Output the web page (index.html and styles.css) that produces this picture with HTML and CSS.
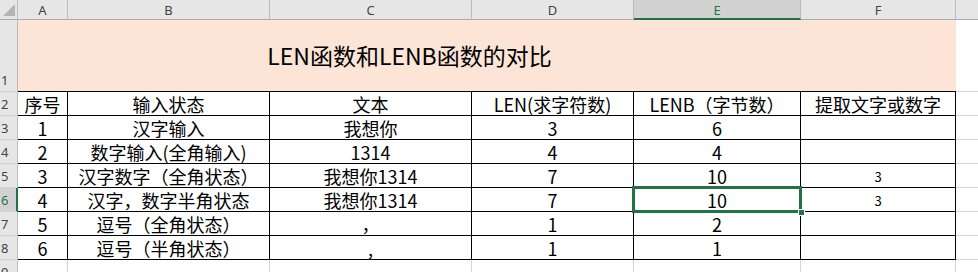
FILE: index.html
```html
<!DOCTYPE html>
<html lang="zh-CN">
<head>
<meta charset="utf-8">
<title>LEN函数和LENB函数的对比</title>
<link rel="stylesheet" href="styles.css">
</head>
<body>
<div class="sheet">
  <div class="grid">
    <!-- column header row -->
    <div class="corner"><span class="tri"></span></div>
    <div class="ch">A</div>
    <div class="ch">B</div>
    <div class="ch">C</div>
    <div class="ch">D</div>
    <div class="ch sel">E</div>
    <div class="ch">F</div>
    <div class="ch last"></div>

    <!-- row 1 -->
    <div class="rh tall">1</div>
    <div class="title">LEN函数和LENB函数的对比</div>
    <div class="g"></div>

    <!-- row 2 -->
    <div class="rh">2</div>
    <div class="c">序号</div>
    <div class="c">输入状态</div>
    <div class="c">文本</div>
    <div class="c">LEN(求字符数)</div>
    <div class="c">LENB（字节数）</div>
    <div class="c">提取文字或数字</div>
    <div class="g"></div>

    <!-- row 3 -->
    <div class="rh">3</div>
    <div class="c">1</div>
    <div class="c">汉字输入</div>
    <div class="c">我想你</div>
    <div class="c">3</div>
    <div class="c">6</div>
    <div class="c"></div>
    <div class="g"></div>

    <!-- row 4 -->
    <div class="rh">4</div>
    <div class="c">2</div>
    <div class="c">数字输入(全角输入)</div>
    <div class="c">1314</div>
    <div class="c">4</div>
    <div class="c">4</div>
    <div class="c"></div>
    <div class="g"></div>

    <!-- row 5 -->
    <div class="rh">5</div>
    <div class="c">3</div>
    <div class="c">汉字数字（全角状态）</div>
    <div class="c">我想你1314</div>
    <div class="c">7</div>
    <div class="c">10</div>
    <div class="c small">3</div>
    <div class="g"></div>

    <!-- row 6 -->
    <div class="rh selrow">6</div>
    <div class="c">4</div>
    <div class="c">汉字，数字半角状态</div>
    <div class="c">我想你1314</div>
    <div class="c">7</div>
    <div class="c">10</div>
    <div class="c small">3</div>
    <div class="g"></div>

    <!-- row 7 -->
    <div class="rh">7</div>
    <div class="c">5</div>
    <div class="c">逗号（全角状态）</div>
    <div class="c">，</div>
    <div class="c">1</div>
    <div class="c">2</div>
    <div class="c"></div>
    <div class="g"></div>

    <!-- row 8 -->
    <div class="rh">8</div>
    <div class="c">6</div>
    <div class="c">逗号（半角状态）</div>
    <div class="c">,</div>
    <div class="c">1</div>
    <div class="c">1</div>
    <div class="c"></div>
    <div class="g"></div>

    <!-- row 9 -->
    <div class="rh">9</div>
    <div class="e"></div>
    <div class="e"></div>
    <div class="e"></div>
    <div class="e"></div>
    <div class="e"></div>
    <div class="e"></div>
    <div class="g"></div>
  </div>
  <div class="selection"><span class="handle"></span></div>
</div>
</body>
</html>
```

FILE: styles.css
```css
* { box-sizing: border-box; }

html, body {
  margin: 0;
  padding: 0;
  background: #ffffff;
}

body {
  width: 978px;
  height: 272px;
  overflow: hidden;
  font-family: "Noto Sans CJK SC", "Noto Sans", sans-serif;
  color: #000;
}

.sheet {
  position: relative;
  width: 978px;
  height: 272px;
  overflow: hidden;
}

.grid {
  display: grid;
  grid-template-columns: 18px 50px 202px 202px 162px 167px 155px 1fr;
  grid-template-rows: 20px 72px repeat(7, 24px) 24px;
}

/* column headers */
.corner {
  background: #e6e6e6;
  border-right: 1px solid #bcbcbc;
  border-bottom: 1px solid #ababab;
  position: relative;
}
.tri {
  position: absolute;
  right: 2px;
  bottom: 3px;
  width: 0;
  height: 0;
  border-left: 12px solid transparent;
  border-bottom: 12px solid #b4b4b4;
}

.ch {
  background: #e6e6e6;
  border-right: 1px solid #bcbcbc;
  border-bottom: 1px solid #ababab;
  color: #444;
  font-family: "Noto Sans", "Noto Sans CJK SC", sans-serif;
  font-size: 13px;
  display: flex;
  align-items: center;
  justify-content: center;
  padding-top: 1px;
}
.ch.sel {
  background: #d2d2d2;
  color: #217346;
  border-bottom: 2px solid #217346;
}
.ch.last { border-right: none; }

/* row headers */
.rh {
  background: #e6e6e6;
  border-right: 1px solid #bcbcbc;
  border-bottom: 1px solid #d0d0d0;
  color: #444;
  font-family: "Noto Sans", "Noto Sans CJK SC", sans-serif;
  font-size: 13px;
  display: flex;
  align-items: center;
  justify-content: flex-start;
  padding-left: 1px;
  padding-top: 1px;
}
.rh.tall {
  align-items: flex-end;
  padding-bottom: 2px;
}
.rh.selrow {
  background: #d2d2d2;
  color: #217346;
  border-right: 2px solid #217346;
}

/* title */
.title {
  grid-column: 2 / 8;
  background: #fce4d6;
  border-bottom: 1px solid #000;
  font-size: 23px;
  display: flex;
  align-items: center;
  justify-content: center;
  padding-right: 155px;
  padding-bottom: 1px;
}

/* table cells */
.c {
  border-right: 1px solid #000;
  border-bottom: 1px solid #000;
  font-size: 18px;
  line-height: 1;
  display: flex;
  align-items: center;
  justify-content: center;
  white-space: nowrap;
  padding-top: 1px;
}
.c.small {
  font-size: 13px;
}

/* empty cells */
.e {
  border-right: 1px solid #d4d4d4;
  border-bottom: 1px solid #d4d4d4;
}
.g {
  border-bottom: 1px solid #d4d4d4;
}

/* selection */
.selection {
  position: absolute;
  left: 632px;
  top: 186px;
  width: 170px;
  height: 27px;
  border: 3px solid #217346;
}
.handle {
  position: absolute;
  right: -6px;
  bottom: -6px;
  width: 7px;
  height: 7px;
  background: #217346;
  border: 1px solid #fff;
}
```
